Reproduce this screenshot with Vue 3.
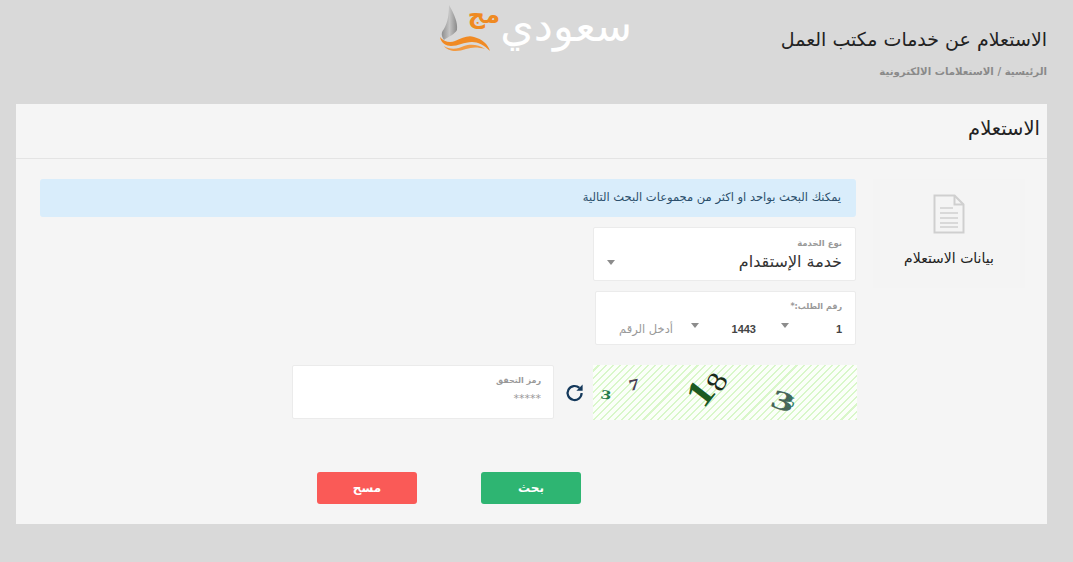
<template>
  <div class="page" dir="rtl">
    <!-- 헤더 -->
    <header class="top">
      <div class="heading">
        <h1>الاستعلام عن خدمات مكتب العمل</h1>
        <p class="crumb">الرئيسية / الاستعلامات الالكترونية</p>
      </div>
      <div class="logo">
        <span class="logo-word">سعودي</span>
        <span class="logo-small">مج</span>
        <svg class="logo-mark" width="52" height="50" viewBox="0 0 52 50">
          <defs>
            <linearGradient id="leaf" x1="0" y1="0" x2="1" y2="0">
              <stop offset="0" stop-color="#8f8f8f" />
              <stop offset="0.5" stop-color="#c4c4c4" />
              <stop offset="1" stop-color="#8a8a8a" />
            </linearGradient>
          </defs>
          <path d="M11 3C16 12 20 20 19 28C17 32 10 35 6 38C3 34 3 30 6 27C10 20 11 12 11 3z" fill="url(#leaf)" />
          <path d="M2 35C6 40 12 41 17 39C24 36 30 33 36 35C44 37 50 42 52 49C46 43 40 40 34 40C26 40 20 44 13 44C8 44 3 41 2 35z" fill="#f08a24" />
          <path d="M6 44C12 48 20 47 26 44C32 42 40 42 47 47C40 45 34 45 28 47C20 50 10 50 6 44z" fill="#f29a42" />
        </svg>
      </div>
    </header>

    <!-- 카드 -->
    <section class="card">
      <h2 class="card-title">الاستعلام</h2>
      <div class="card-body">
        <aside class="side">
          <svg width="32" height="40" viewBox="0 0 32 40" fill="none" stroke="#cfcfcf" stroke-width="2">
            <path d="M1.5 1.5h20l9 9v28h-29z" />
            <path d="M21.5 1.5v9h9" />
            <path d="M7 14h13M7 19h18M7 24h18M7 29h18M7 33h18" stroke-width="1.6" />
          </svg>
          <span>بيانات الاستعلام</span>
        </aside>

        <div class="form">
          <div class="alert">يمكنك البحث بواحد او اكثر من مجموعات البحث التالية</div>

          <div class="box service">
            <label>نوع الخدمة</label>
            <div class="service-row">
              <span class="service-value">خدمة الإستقدام</span>
              <i class="caret"></i>
            </div>
          </div>

          <div class="box request">
            <label class="small-label">رقم الطلب:*</label>
            <div class="request-row">
              <div class="part part-a"><b>1</b><i class="caret"></i></div>
              <div class="part part-b"><b>1443</b><i class="caret"></i></div>
              <div class="part part-c">أدخل الرقم</div>
            </div>
          </div>

          <div class="captcha-row">
            <div class="captcha" dir="ltr">
              <span
                v-for="d in digits"
                :key="d.id"
                class="digit"
                :class="{ thin: d.thin }"
                :style="{ left: d.x - 20 + 'px', top: d.y - 20 + 'px', fontSize: d.size + 'px', color: d.color, transform: d.tf }"
              >{{ d.text }}</span>
            </div>
            <svg class="refresh" width="20" height="20" viewBox="0 0 20 20" fill="none">
              <path d="M16.6 10a7 7 0 1 1-2.2-5.1" stroke="#15395b" stroke-width="2.2" />
              <path d="M17.6 1.6v6.2h-6.2z" fill="#15395b" />
            </svg>
            <div class="box code">
              <label class="small-label">رمز التحقق</label>
              <span class="stars">*****</span>
            </div>
          </div>

          <div class="actions">
            <button class="btn green">بحث</button>
            <button class="btn red">مسح</button>
          </div>
        </div>
      </div>
    </section>
  </div>
</template>

<script setup>
const digits = [
  { id: 1, text: '3', x: 13, y: 29, size: 13, color: '#1d7a4a', tf: 'rotate(8deg) scaleX(1.6)' },
  { id: 2, text: '7', x: 41, y: 20, size: 16, color: '#4a3f55', tf: 'rotate(-12deg) scaleX(1.3)' },
  { id: 3, text: '1', x: 107, y: 28, size: 38, color: '#1c5a22', tf: 'rotate(-52deg) scaleX(1.15)' },
  { id: 4, text: '8', x: 124, y: 17, size: 28, color: '#1b2b1b', tf: 'rotate(-62deg) scaleX(1.15)', thin: true },
  { id: 5, text: '3', x: 190, y: 36, size: 27, color: '#48665a', tf: 'rotate(18deg) scaleX(1.7)' },
  { id: 6, text: '5', x: 198, y: 37, size: 15, color: '#2a7a68', tf: 'rotate(10deg)', thin: true }
]
</script>

<style>
html, body {
  margin: 0;
  background: #d9d9d9;
}
</style>

<style scoped>
.page {
  width: 1073px;
  height: 562px;
  overflow: hidden;
  background: #d9d9d9;
  font-family: "DejaVu Sans", "Noto Sans", sans-serif;
  color: #222;
}

/* 헤더 */
.top {
  display: flex;
  height: 104px;
  padding-right: 26px;
  box-sizing: border-box;
}

.heading {
  width: 268px;
  padding-top: 27px;
}

h1 {
  margin: 0;
  font-size: 19px;
  line-height: 24px;
  font-weight: 400;
  white-space: nowrap;
}

.crumb {
  margin: 14px 0 0;
  font-size: 10.2px;
  line-height: 14px;
  font-weight: 700;
  color: #8a8a8a;
  white-space: nowrap;
}

.logo {
  display: flex;
  align-items: flex-start;
  height: 56px;
  margin-right: 147px;
}

.logo-word {
  display: block;
  width: 132px;
  font-size: 43px;
  line-height: 52px;
  color: #fff;
  white-space: nowrap;
}

.logo-small {
  width: 30px;
  margin-top: 0;
  font-size: 24px;
  line-height: 30px;
  font-weight: 700;
  color: #ef8a22;
  position: relative;
  z-index: 1;
}

.logo-mark {
  margin-top: 2px;
  margin-right: -20px;
}

/* 카드 */
.card {
  width: 1031px;
  height: 420px;
  margin-right: 26px;
  background: #f5f5f5;
}

.card-title {
  margin: 0;
  height: 55px;
  padding: 13px 7px 0 0;
  box-sizing: border-box;
  border-bottom: 1px solid #e4e4e4;
  font-size: 19.5px;
  line-height: 24px;
  font-weight: 400;
}

.card-body {
  display: flex;
  padding: 20px 22px 0 0;
}

.side {
  display: flex;
  flex-direction: column;
  align-items: center;
  width: 152px;
  height: 109px;
  padding-top: 15px;
  box-sizing: border-box;
  background: #f4f4f4;
  font-size: 14px;
  line-height: 18px;
  gap: 15px;
}

.form {
  display: flex;
  flex-direction: column;
  align-items: flex-start;
  width: 816px;
  margin-right: 17px;
}

.alert {
  width: 100%;
  height: 38px;
  padding-right: 15px;
  box-sizing: border-box;
  border-radius: 3px;
  background: #d9edfb;
  color: #2b4f6b;
  font-size: 11.5px;
  line-height: 36px;
}

.box {
  background: #fff;
  border: 1px solid #ebebeb;
  border-radius: 2px;
  box-sizing: border-box;
}

label {
  display: block;
  font-size: 8.5px;
  line-height: 12px;
  font-weight: 700;
  color: #999;
}

.small-label {
  font-size: 8px;
}

.caret {
  display: block;
  width: 0;
  height: 0;
  border-left: 4px solid transparent;
  border-right: 4px solid transparent;
  border-top: 5px solid #8c8c8c;
}

.service {
  width: 263px;
  height: 54px;
  margin-top: 10px;
  padding: 9px 13px 0;
}

.service-row {
  display: flex;
  justify-content: space-between;
  align-items: center;
  height: 22px;
  margin-top: 2px;
}

.service-value {
  font-size: 16px;
  line-height: 22px;
  color: #333;
}

.request {
  width: 261px;
  height: 54px;
  margin-top: 10px;
  padding: 9px 13px 0 0;
}

.request-row {
  display: flex;
  margin-top: 6px;
  height: 20px;
  align-items: center;
}

.part {
  display: flex;
  justify-content: space-between;
  align-items: flex-start;
  font-size: 11.5px;
  line-height: 20px;
}

.part b {
  font-family: "Liberation Sans", sans-serif;
  font-size: 11px;
  font-weight: 700;
  color: #444;
}

.part .caret {
  margin-top: 4px;
}

.part-a {
  width: 61px;
  margin-left: 25px;
}

.part-b {
  width: 65px;
  margin-left: 18px;
}

.part-c {
  color: #999;
}

.captcha-row {
  display: flex;
  align-items: flex-start;
  margin-top: 20px;
  margin-right: -1px;
}

.captcha {
  position: relative;
  flex: none;
  width: 264px;
  height: 55px;
  overflow: hidden;
  background: repeating-linear-gradient(135deg, #fbfff9 0 3.5px, #d9f7ca 3.5px 5px);
}

.digit {
  position: absolute;
  display: flex;
  align-items: center;
  justify-content: center;
  width: 40px;
  height: 40px;
  font-family: "Liberation Serif", serif;
  font-weight: 700;
  line-height: 1;
}

.digit.thin {
  font-weight: 400;
}

.refresh {
  flex: none;
  margin: 18px 8px 0 11px;
}

.code {
  width: 262px;
  height: 54px;
  padding: 9px 12px 0;
}

.stars {
  display: block;
  margin-top: 5px;
  font-size: 11px;
  line-height: 14px;
  color: #999;
}

.actions {
  display: flex;
  gap: 64px;
  margin-top: 52px;
  margin-right: 275px;
}

.btn {
  width: 100px;
  height: 32px;
  padding: 0;
  border: none;
  border-radius: 3px;
  color: #fff;
  font-family: inherit;
  font-size: 12px;
  font-weight: 700;
}

.green {
  background: #2eb572;
}

.red {
  background: #fa5a57;
}
</style>
